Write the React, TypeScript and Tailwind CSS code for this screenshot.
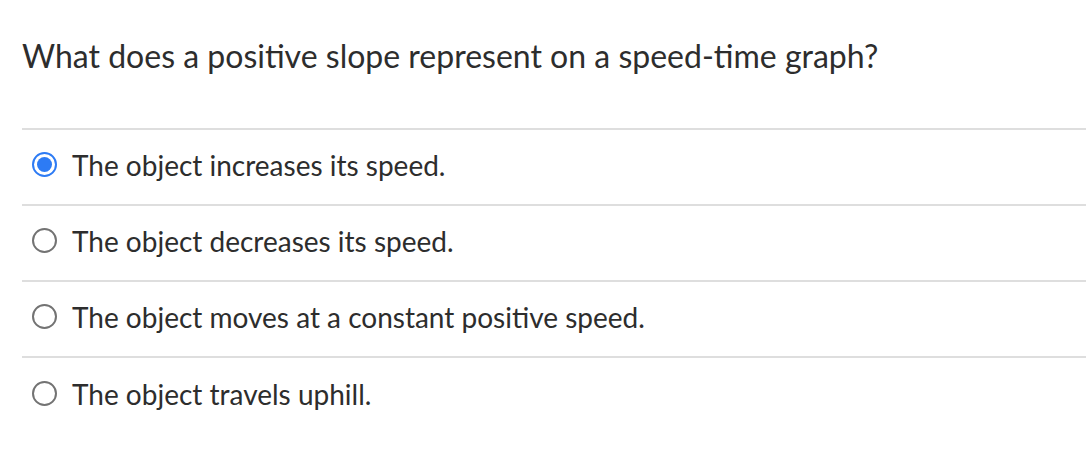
import React from 'react';

const answers = [
  'The object increases its speed.',
  'The object decreases its speed.',
  'The object moves at a constant positive speed.',
  'The object travels uphill.',
];

function Radio({ checked }: { checked: boolean }) {
  if (checked) {
    return (
      <span className="flex h-[25px] w-[25px] shrink-0 items-center justify-center rounded-full border-[2px] border-[#2d7bf4] bg-white">
        <span className="h-[15px] w-[15px] rounded-full bg-[#2d7bf4]" />
      </span>
    );
  }
  return <span className="h-[25px] w-[25px] shrink-0 rounded-full border-[2px] border-[#737373] bg-white" />;
}

export default function App() {
  const selected = 0;
  return (
    <div className="h-[460px] w-[1086px] bg-white pl-[22px] text-[#2d2d2d]" style={{ fontFamily: 'Lato, "Noto Sans", sans-serif' }}>
      <div className="pt-[37px] text-[32px] leading-[38px]">What does a positive slope represent on a speed-time graph?</div>
      <div className="mt-[53px] border-t-2 border-[#dedede]">
        {answers.map((a, i) => (
          <div
            key={a}
            className={`flex h-[76px] items-center gap-[15px] pb-[5px] pl-[10px] text-[28px] ${i < answers.length - 1 ? 'border-b-2 border-[#dedede]' : ''}`}
          >
            <Radio checked={i === selected} />
            <span>{a}</span>
          </div>
        ))}
      </div>
    </div>
  );
}
